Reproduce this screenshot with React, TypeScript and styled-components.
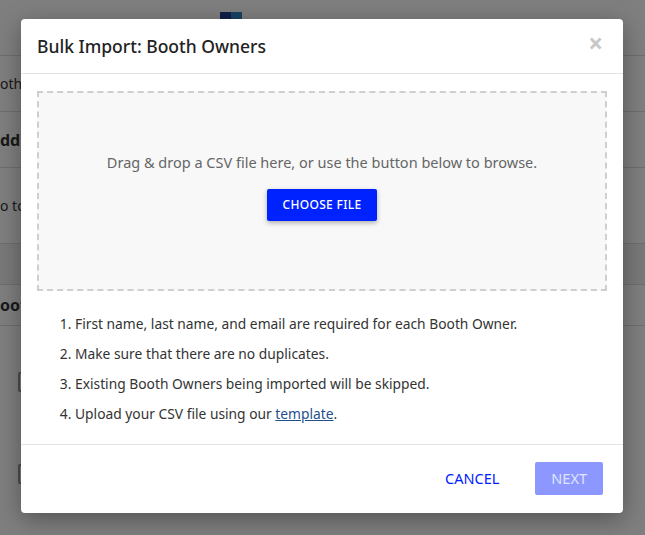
import React from 'react';
import styled, { createGlobalStyle } from 'styled-components';

const Global = createGlobalStyle`
  html, body { margin: 0; padding: 0; }
  body { font-family: "Noto Sans", "Open Sans", sans-serif; color: #333; background: #fff; }
`

const Page = styled.div`
  width: 645px;
  height: 535px;
  overflow: hidden;
  position: relative;
  background: #fff;
`
const TopBar = styled.div`
  height: 55px;
  border-bottom: 1px solid #ddd;
  display: flex;
  align-items: flex-start;
  padding-left: 220px;
`
const Logo = styled.div`
  width: 22px;
  height: 14px;
  margin-top: 12px;
  background: linear-gradient(90deg, #1c3f8f 50%, #2f86c8 50%);
`
const BgRow = styled.div<{ $h: number; $shade?: boolean; $bold?: boolean }>`
  height: ${p => p.$h}px;
  border-bottom: 1px solid #ddd;
  background: ${p => (p.$shade ? '#f2f2f2' : '#fff')};
  display: flex;
  align-items: center;
  font-size: ${p => (p.$bold ? 16 : 14)}px;
  font-weight: ${p => (p.$bold ? 700 : 400)};
`
const BgCheck = styled.div`
  display: flex;
  align-items: center;
  gap: 8px;
  height: 32px;
  padding-left: 18px;
  font-size: 15px;
  color: #444;
  &::before {
    content: '';
    width: 16px;
    height: 16px;
    border: 2px solid #999;
    border-radius: 2px;
  }
`
const Spacer = styled.div<{ $h: number }>`
  height: ${p => p.$h}px;
`
const Overlay = styled.div`
  position: absolute;
  inset: 0;
  background: rgba(0, 0, 0, 0.5);
`
const Modal = styled.div`
  position: absolute;
  left: 21px;
  top: 19px;
  width: 602px;
  height: 494px;
  background: #fff;
  border-radius: 4px;
  box-shadow: 0 6px 24px rgba(0, 0, 0, 0.35);
  display: flex;
  flex-direction: column;
`
const Header = styled.div`
  height: 55px;
  border-bottom: 1px solid #e3e3e3;
  display: flex;
  align-items: center;
  justify-content: space-between;
  padding: 0 20px 0 16px;
  box-sizing: border-box;
`
const Title = styled.h2`
  margin: 0;
  font-size: 17.5px;
  font-weight: 500;
  color: #222;
`
const Close = styled.span`
  font-size: 26px;
  font-weight: 700;
  color: #c8c8c8;
  line-height: 1;
  margin-top: -6px;
`
const Body = styled.div`
  flex: 1;
  padding: 17px 16px 0;
`
const Drop = styled.div`
  height: 200px;
  box-sizing: border-box;
  border: 2px dashed #cfcfcf;
  background: #f8f8f8;
  display: flex;
  flex-direction: column;
  align-items: center;
  justify-content: center;
  gap: 17px;
  padding-top: 8px;
  padding-bottom: 18px;
`
const DropText = styled.p`
  margin: 0;
  font-size: 14.5px;
  color: #666;
`
const ChooseBtn = styled.button`
  background: #0022ff;
  color: #fff;
  border: none;
  border-radius: 2px;
  height: 32px;
  padding: 0 16px;
  font-family: inherit;
  font-size: 12px;
  font-weight: 500;
  letter-spacing: 0.3px;
  box-shadow: 0 2px 5px rgba(0, 0, 0, 0.3);
`
const Steps = styled.ol`
  margin: 18px 0 0;
  padding: 0 0 0 38px;
  font-size: 13.8px;
  color: #333;
  li { line-height: 30px; }
`
const Link = styled.a`
  color: #1f4f8f;
  text-decoration: underline;
`
const Footer = styled.div`
  height: 66px;
  border-top: 1px solid #e3e3e3;
  display: flex;
  align-items: center;
  justify-content: flex-end;
  gap: 20px;
  padding: 0 20px 2px 16px;
`
const TextBtn = styled.button<{ $filled?: boolean }>`
  border: none;
  border-radius: 2px;
  height: 33px;
  padding: 0 16px;
  font-family: inherit;
  font-size: 14.5px;
  font-weight: 400;
  background: ${p => (p.$filled ? '#8c98ff' : 'transparent')};
  color: ${p => (p.$filled ? '#dfe3ff' : '#0022ff')};
`

export default function App() {
  return (
    <Page>
      <Global />
      <TopBar><Logo /></TopBar>
      <BgRow $h={55}>oth</BgRow>
      <BgRow $h={55} $bold>dd</BgRow>
      <BgRow $h={75}>o to</BgRow>
      <BgRow $h={40} $shade />
      <BgRow $h={40} $bold>oot</BgRow>
      <Spacer $h={40} />
      <BgCheck>Al</BgCheck>
      <Spacer $h={60} />
      <BgCheck>Allow access to the Participant Registration Report</BgCheck>
      <Overlay />
      <Modal>
        <Header>
          <Title>Bulk Import: Booth Owners</Title>
          <Close>×</Close>
        </Header>
        <Body>
          <Drop>
            <DropText>Drag &amp; drop a CSV file here, or use the button below to browse.</DropText>
            <ChooseBtn>CHOOSE FILE</ChooseBtn>
          </Drop>
          <Steps>
            <li>First name, last name, and email are required for each Booth Owner.</li>
            <li>Make sure that there are no duplicates.</li>
            <li>Existing Booth Owners being imported will be skipped.</li>
            <li>Upload your CSV file using our <Link href="#">template</Link>.</li>
          </Steps>
        </Body>
        <Footer>
          <TextBtn>CANCEL</TextBtn>
          <TextBtn $filled>NEXT</TextBtn>
        </Footer>
      </Modal>
    </Page>
  );
}
